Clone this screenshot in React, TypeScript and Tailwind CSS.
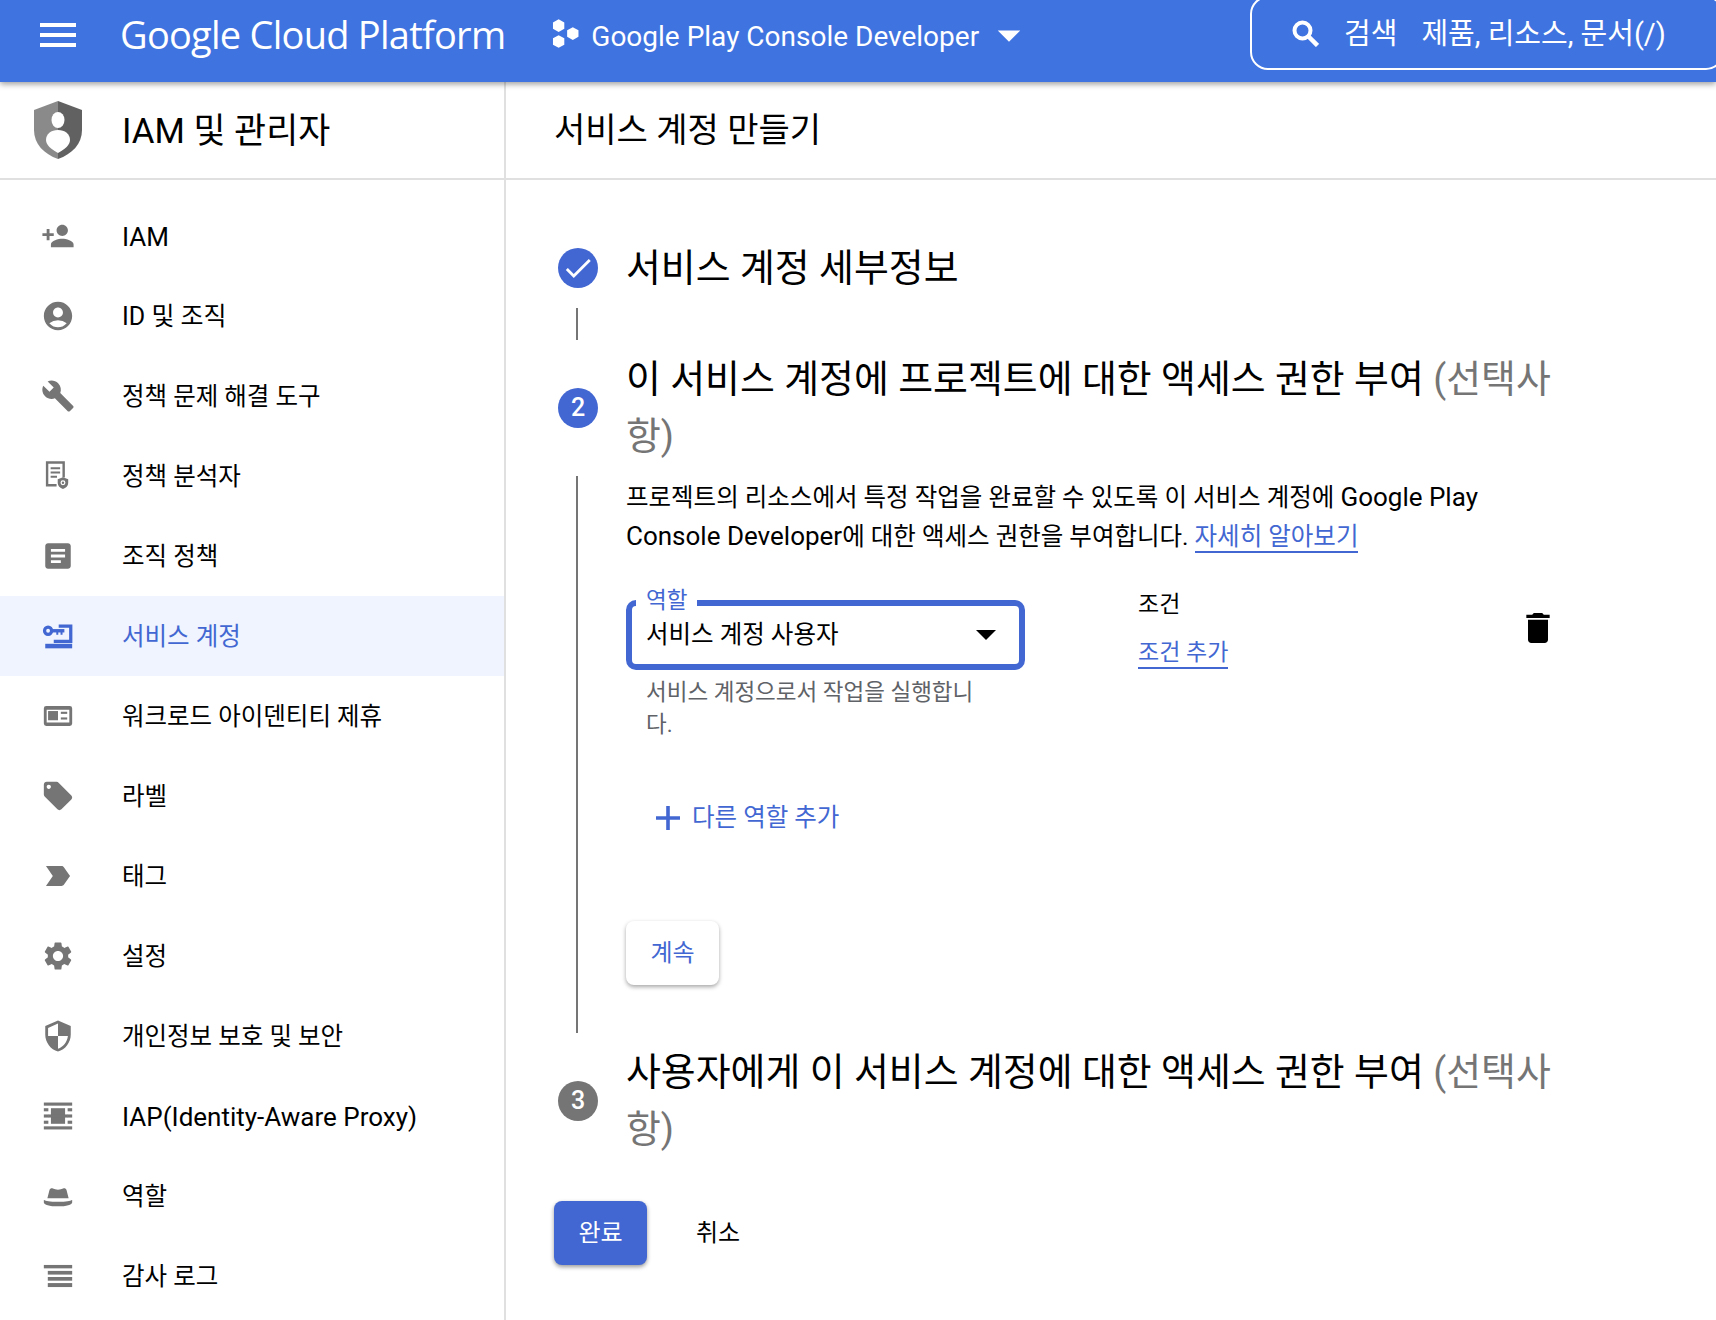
import type { ReactNode } from 'react'
import { MdAccountCircle, MdArrowDropDown, MdArticle, MdBuild, MdCheck, MdDelete, MdLabelImportant, MdLocalOffer, MdMenu, MdPersonAdd, MdSecurity, MdSettings } from 'react-icons/md'

const Doc = () => (
  <svg viewBox="0 0 24 24" className="w-[34px] h-[34px]" fill="none">
    <path d="M16 13V2.500H4.300v16H11" stroke="#757575" strokeWidth="1.700" />
    <path d="M6.800 6.500h6.700M6.800 9.500h6.700M6.800 12.500h4.500" stroke="#757575" strokeWidth="1.400" />
    <path d="M15.500 12.800l3.700 1.500v2.700c0 2-1.600 3.500-3.700 4.200-2.100-.7-3.700-2.200-3.700-4.200v-2.700z" fill="#757575" />
    <circle cx="15.500" cy="16.800" r="1.300" fill="none" stroke="#fff" strokeWidth="0.900" />
  </svg>
)

const KeyIcon = () => (
  <svg viewBox="0 0 24 24" className="w-[34px] h-[34px]" fill="none">
    <circle cx="5" cy="8.300" r="2.500" stroke="#4267d2" strokeWidth="2.300" />
    <path d="M8 8.300h8.500" stroke="#4267d2" strokeWidth="2.400" />
    <path d="M11.500 9v2.200M14.500 9v2.200" stroke="#4267d2" strokeWidth="1.400" />
    <path d="M12.500 5h8.500v10.800H9" stroke="#4267d2" strokeWidth="2.300" />
    <rect x="3" y="17.500" width="19" height="3.200" fill="#4267d2" />
  </svg>
)

const CardIcon = () => (
  <svg viewBox="0 0 24 24" className="w-[34px] h-[34px]">
    <path fillRule="evenodd" fill="#757575" d="M3.700 5h16.600A1.700 1.700 0 0 1 22 6.700v10.600a1.700 1.700 0 0 1-1.700 1.700H3.700A1.700 1.700 0 0 1 2 17.300V6.700A1.700 1.700 0 0 1 3.700 5zM4 7.500v9h16v-9z" />
    <rect x="5" y="8.500" width="7" height="6.500" fill="#757575" />
    <rect x="14" y="9" width="4.500" height="1.500" fill="#757575" />
    <rect x="14" y="13" width="4.500" height="1.500" fill="#757575" />
  </svg>
)

const ProxyIcon = () => (
  <svg viewBox="0 0 24 24" className="w-[34px] h-[34px]" fill="#757575">
    <rect x="2" y="2.500" width="20" height="2.200" />
    <rect x="2" y="19.300" width="20" height="2.200" />
    <rect x="2" y="6.500" width="3.200" height="2.200" /><rect x="18.800" y="6.500" width="3.200" height="2.200" />
    <rect x="2" y="10.900" width="3.200" height="2.200" /><rect x="18.800" y="10.900" width="3.200" height="2.200" />
    <rect x="2" y="15.300" width="3.200" height="2.200" /><rect x="18.800" y="15.300" width="3.200" height="2.200" />
    <rect x="7" y="6.500" width="10" height="11" />
    <rect x="5" y="10.900" width="14" height="2.200" />
  </svg>
)

const HatIcon = () => (
  <svg viewBox="0 0 24 24" className="w-[34px] h-[34px]" fill="#757575">
    <path d="M4.500 13.500L6 7.800c.3-1 1.400-1.500 2.400-1.100l1.600.6c1.300.4 2.700.4 4 0l1.600-.6c1-.4 2.100.1 2.400 1.100l1.500 5.700z" />
    <path d="M2 14.800c1.500.7 4 1.300 10 1.300s8.500-.6 10-1.300v1.700c0 1.500-4 2.800-10 2.800S2 18 2 16.500z" />
  </svg>
)

const LinesIcon = () => (
  <svg viewBox="0 0 24 24" className="w-[34px] h-[34px]" fill="#757575">
    <rect x="2" y="4.200" width="20" height="2.400" />
    <rect x="4.800" y="8.400" width="17.200" height="2.600" />
    <rect x="4.800" y="12.700" width="17.200" height="2.600" />
    <rect x="4.800" y="17" width="17.200" height="2.800" />
  </svg>
)

const HexIcon = () => (
  <svg viewBox="0 0 30 30" className="w-[34px] h-[34px]" fill="#fff">
    <path d="M8.500 2l5 2.800v5.600l-5 2.800-5-2.800V4.800z" />
    <path d="M8.500 16l5 2.800v5.600l-5 2.800-5-2.800v-5.600z" />
    <path d="M21 9l5 2.800v5.600l-5 2.800-5-2.800v-5.600z" />
  </svg>
)

const SearchIcon = () => (
  <svg viewBox="0 0 27 27" className="w-[27px] h-[27px] -mt-[3px] shrink-0" fill="none" stroke="#fff">
    <circle cx="10.500" cy="10.500" r="8" strokeWidth="4" />
    <path d="M16 16l9.500 9.500" strokeWidth="4.500" />
  </svg>
)

const ShieldLogo = () => (
  <svg viewBox="0 0 48 58" className="w-[48px] h-[58px]">
    <path d="M24 0L0 9v20c0 14 10 24 24 29z" fill="#8a8a8a" />
    <path d="M24 0l24 9v20c0 14-10 24-24 29z" fill="#616161" />
    <ellipse cx="24" cy="19" rx="6.500" ry="8" fill="#fff" />
    <path d="M24 29c7 0 12 4 12 10 0 5-5 9-12 13-7-4-12-8-12-13 0-6 5-10 12-10z" fill="#fff" />
  </svg>
)

const nav: { label: string; icon: ReactNode; size: string; active?: boolean }[] = [
  { label: 'IAM', icon: <MdPersonAdd size={34} />, size: 'text-[26px]' },
  { label: 'ID 및 조직', icon: <MdAccountCircle size={34} />, size: 'text-[25px]' },
  { label: '정책 문제 해결 도구', icon: <MdBuild size={34} />, size: 'text-[24.5px]' },
  { label: '정책 분석자', icon: <Doc />, size: 'text-[24.5px]' },
  { label: '조직 정책', icon: <MdArticle size={34} />, size: 'text-[24.5px]' },
  { label: '서비스 계정', icon: <KeyIcon />, size: 'text-[24.5px]', active: true },
  { label: '워크로드 아이덴티티 제휴', icon: <CardIcon />, size: 'text-[24.5px]' },
  { label: '라벨', icon: <MdLocalOffer size={34} />, size: 'text-[24.5px]' },
  { label: '태그', icon: <MdLabelImportant size={34} />, size: 'text-[24.5px]' },
  { label: '설정', icon: <MdSettings size={34} />, size: 'text-[24.5px]' },
  { label: '개인정보 보호 및 보안', icon: <MdSecurity size={34} />, size: 'text-[24.5px]' },
  { label: 'IAP(Identity-Aware Proxy)', icon: <ProxyIcon />, size: 'text-[26px]' },
  { label: '역할', icon: <HatIcon />, size: 'text-[24.5px]' },
  { label: '감사 로그', icon: <LinesIcon />, size: 'text-[24.5px]' },
]

function StepTitle({ n, done, gray, children }: { n?: number; done?: boolean; gray?: boolean; children: ReactNode }) {
  return (
    <div className="flex items-center">
      <div className={`w-10 h-10 ml-1 shrink-0 rounded-full flex items-center justify-center text-white text-[25px] font-medium ${gray ? 'bg-[#757575]' : 'bg-[#4267d2]'}`}>
        {done ? <MdCheck size={34} /> : n}
      </div>
      <div className="ml-[28px] w-[935px] text-[37.9px] leading-[57px] text-black">{children}</div>
    </div>
  )
}

export default function App() {
  return (
    <div className="w-full h-[1320px] overflow-hidden bg-white text-black text-[24.5px] font-['Roboto','Noto_Sans_CJK_KR',sans-serif]">
      <header className="relative z-10 h-[82px] pb-[12px] bg-[#3f73e0] text-white flex items-center shadow-[0_2px_6px_rgba(0,0,0,0.4)]">
        <MdMenu size={48} className="ml-[34px] shrink-0" />
        <div className="ml-[38px] -mt-[2px] text-[38px] font-['Open_Sans',sans-serif] tracking-[-0.75px]">Google Cloud Platform</div>
        <div className="ml-[44px] -mt-[2px]"><HexIcon /></div>
        <div className="ml-[8px] mt-[3px] text-[28px]">Google Play Console Developer</div>
        <MdArrowDropDown size={54} className="ml-[3px]" />
        <div className="ml-auto -mr-2 self-start -mt-1 h-[74px] w-[474px] border-2 border-white rounded-[18px] flex items-center pl-[40px] pt-[4px]">
          <SearchIcon />
          <span className="ml-[25px] text-[29px]">검색</span>
          <span className="ml-[24px] text-[29px]">제품, 리소스, 문서(/)</span>
        </div>
      </header>

      <div className="flex h-[1238px]">
        <aside className="w-[506px] shrink-0 border-r-2 border-[#e0e0e0]">
          <div className="h-[98px] border-b-2 border-[#e0e0e0] flex items-center pl-[34px]">
            <ShieldLogo />
            <span className="ml-[40px] pt-[2px] text-[34.8px]">IAM 및 관리자</span>
          </div>
          <nav className="pt-[16px]">
            {nav.map(item => (
              <div key={item.label} className={`h-[80px] flex items-center pl-[41px] ${item.active ? 'bg-[#eff4fe] text-[#4267d2]' : 'text-[#757575]'}`}>
                <span className="w-[34px] h-[34px] flex items-center justify-center">{item.icon}</span>
                <span className={`ml-[47px] pt-[2px] ${item.size} ${item.active ? 'text-[#4267d2]' : 'text-black'}`}>{item.label}</span>
              </div>
            ))}
          </nav>
        </aside>

        <main className="flex-1 min-w-0">
          <div className="h-[98px] border-b-2 border-[#e0e0e0] flex items-center pl-[48px] text-[34px]">서비스 계정 만들기</div>
          <div className="pl-[48px] pt-[59px]">
            <div className="h-[58px] flex items-center">
              <StepTitle done>서비스 계정 세부정보</StepTitle>
            </div>
            <div className="ml-[22px] mt-[11px] w-[2px] h-[32px] bg-[#757575]" />
            <div className="mt-[11px]">
              <StepTitle n={2}>
                이 서비스 계정에 프로젝트에 대한 액세스 권한 부여 <span className="text-[#757575]">(선택사항)</span>
              </StepTitle>
            </div>
            <div className="flex mt-[11px]">
              <div className="ml-[22px] w-[2px] h-[557px] bg-[#757575] shrink-0" />
              <div className="ml-[48px] flex-1 min-w-0">
                <p className="w-[880px] leading-[38px] mt-[2px]">
                  프로젝트의 리소스에서 특정 작업을 완료할 수 있도록 이 서비스 계정에 <span className="text-[26px]">Google Play Console Developer</span>에 대한 액세스 권한을 부여합니다. <a className="text-[#4267d2] border-b-2 border-[#4267d2]">자세히 알아보기</a>
                </p>
                <div className="flex mt-[44px]">
                  <div className="w-[399px] shrink-0">
                    <div className="relative h-[70px] border-[6px] border-[#4267d2] rounded-[10px] flex items-center justify-between pl-[14px] pr-[23px]">
                      <span className="absolute -top-[20px] left-[4px] bg-white px-[10px] text-[22.5px] leading-[28px] text-[#4267d2]">역할</span>
                      <span>서비스 계정 사용자</span>
                      <span className="w-0 h-0 border-x-[10px] border-x-transparent border-t-[10px] border-t-black" />
                    </div>
                    <div className="mt-[6px] ml-[20px] w-[340px] text-[22.5px] leading-[32px] text-[#5f6368]">서비스 계정으로서 작업을 실행합니다.</div>
                  </div>
                  <div className="ml-[113px] -mt-[10px] w-[412px] text-[23px] shrink-0 flex justify-between">
                    <div>
                      <div className="leading-[30px]">조건</div>
                      <a className="inline-block mt-[18px] leading-[29px] text-[#4267d2] border-b-2 border-[#4267d2]">조건 추가</a>
                    </div>
                    <MdDelete size={40} className="mt-[18px] mr-[-8px]" />
                  </div>
                </div>
                <div className="flex items-center mt-[60px] ml-[30px] text-[#4267d2]">
                  <svg viewBox="0 0 24 24" className="w-6 h-6" fill="#4267d2"><path d="M10.200 0h3.600v10.200H24v3.600H13.800V24h-3.600V13.800H0v-3.600h10.200z" /></svg>
                  <span className="ml-[12px]">다른 역할 추가</span>
                </div>
                <button className="block mt-[84px] w-[93px] h-[64px] rounded-[8px] bg-white text-[#4267d2] text-[24px] shadow-[0_2px_4px_rgba(0,0,0,0.35)]">계속</button>
              </div>
            </div>
            <div className="mt-[11px]">
              <StepTitle n={3} gray>
                사용자에게 이 서비스 계정에 대한 액세스 권한 부여 <span className="text-[#757575]">(선택사항)</span>
              </StepTitle>
            </div>
            <div className="flex items-center mt-[43px]">
              <button className="w-[93px] h-[64px] rounded-[8px] bg-[#4267d2] text-white text-[24px] shadow-[0_2px_4px_rgba(0,0,0,0.4)]">완료</button>
              <span className="ml-[49px] text-[24px]">취소</span>
            </div>
          </div>
        </main>
      </div>
    </div>
  )
}
